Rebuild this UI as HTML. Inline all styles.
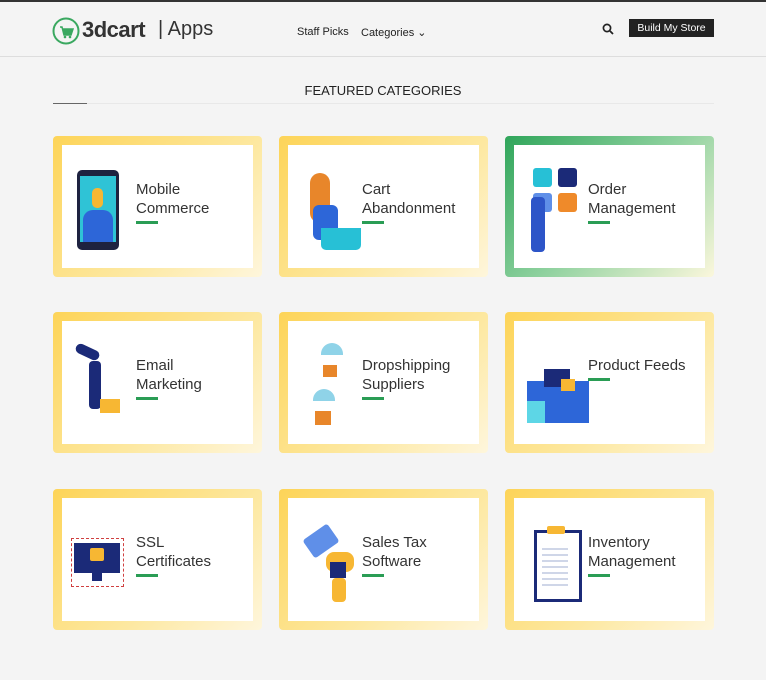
<!DOCTYPE html>
<html><head><style>
body{margin:0;width:766px;height:680px;background:#f4f4f4;font-family:"Liberation Sans",sans-serif;position:relative;overflow:hidden}
.hdr{position:absolute;left:0;top:0;width:766px;height:57px;border-bottom:1px solid #ddd;border-top:2px solid #333;box-sizing:border-box}
.abs{position:absolute}
.card{position:absolute;width:209px;height:141px;border-radius:4px;background:linear-gradient(135deg,#fdd458 0%,#fde8a0 60%,#fef6dc 100%)}
.card.g{background:linear-gradient(135deg,#2fa55a 0%,#8ed19e 50%,#fbf7dc 100%)}
.in{position:absolute;left:9px;top:9px;width:191px;height:123px;background:#fff}
.t{position:absolute;left:74px;top:35px;font-size:15px;line-height:19px;color:#333}
.bar{position:absolute;left:74px;top:76px;width:22px;height:3px;background:#2a9d55}
</style></head><body>
<div class="hdr">
 <svg class="abs" style="left:52px;top:15px" width="28" height="28"><circle cx="14" cy="14" r="12.5" fill="none" stroke="#3aa860" stroke-width="2"/><path d="M8 10h2l2 8h7l2-6H11" fill="#3aa860" stroke="#3aa860" stroke-width="1.5"/><circle cx="13" cy="20" r="1.3" fill="#3aa860"/><circle cx="18" cy="20" r="1.3" fill="#3aa860"/></svg>
 <div class="abs" style="left:82px;top:15px;font-size:22px;font-weight:bold;color:#333;letter-spacing:-0.5px">3dcart</div>
 <div class="abs" style="left:158px;top:16px;font-size:20px;color:#333">| Apps</div>
 <div class="abs" style="left:297px;top:24px;font-size:11px;color:#222">Staff Picks</div>
 <div class="abs" style="left:361px;top:24px;font-size:11px;color:#222">Categories ⌄</div>
 <svg class="abs" style="left:602px;top:21px" width="12" height="12"><circle cx="5" cy="5" r="3.6" fill="none" stroke="#222" stroke-width="1.7"/><path d="M8 8l3 3" stroke="#222" stroke-width="1.8"/></svg>
 <div class="abs" style="left:629px;top:17px;width:85px;height:18px;background:#222;color:#fff;font-size:10.5px;line-height:18px;text-align:center">Build My Store</div>
</div>
<div class="abs" style="left:0;top:83px;width:766px;text-align:center;font-size:13px;color:#222">FEATURED CATEGORIES</div>
<div class="abs" style="left:53px;top:103px;width:661px;height:1px;background:#e8e8e8"></div>
<div class="abs" style="left:53px;top:103px;width:34px;height:1px;background:#666"></div>

<div class="card" style="left:53px;top:136px"><div class="in">
 <div class="abs" style="left:15px;top:25px;width:42px;height:80px;background:#1e2240;border-radius:5px"><div class="abs" style="left:3px;top:6px;width:36px;height:66px;background:#2fc3d6"></div><div class="abs" style="left:6px;top:40px;width:30px;height:32px;background:#2d66d8;border-radius:10px 10px 0 0"></div><div class="abs" style="left:15px;top:18px;width:11px;height:20px;background:#f7b733;border-radius:5px"></div></div>
 <div class="t">Mobile<br>Commerce</div><div class="bar"></div></div></div>
<div class="card" style="left:279px;top:136px"><div class="in">
 <div class="abs" style="left:22px;top:28px;width:20px;height:50px;background:#e8862a;border-radius:10px"></div>
 <div class="abs" style="left:25px;top:60px;width:25px;height:35px;background:#2d66d8;border-radius:6px"></div>
 <div class="abs" style="left:33px;top:83px;width:40px;height:22px;background:#27c0d6;border-radius:0 0 5px 5px"></div>
 <div class="t">Cart<br>Abandonment</div><div class="bar"></div></div></div>
<div class="card g" style="left:505px;top:136px"><div class="in">
 <div class="abs" style="left:19px;top:23px;width:19px;height:19px;background:#27c0d6;border-radius:3px"></div>
 <div class="abs" style="left:44px;top:23px;width:19px;height:19px;background:#1b2a78;border-radius:3px"></div>
 <div class="abs" style="left:19px;top:48px;width:19px;height:19px;background:#5f8fe8;border-radius:3px"></div>
 <div class="abs" style="left:44px;top:48px;width:19px;height:19px;background:#ef8a2a;border-radius:3px"></div>
 <div class="abs" style="left:17px;top:52px;width:14px;height:55px;background:#2d55c8;border-radius:4px"></div>
 <div class="t">Order<br>Management</div><div class="bar"></div></div></div>

<div class="card" style="left:53px;top:312px"><div class="in">
 <div class="abs" style="left:13px;top:26px;width:25px;height:10px;background:#1b2a78;border-radius:5px;transform:rotate(25deg)"></div>
 <div class="abs" style="left:27px;top:40px;width:12px;height:48px;background:#1b2a78;border-radius:4px"></div>
 <div class="abs" style="left:38px;top:78px;width:20px;height:14px;background:#f7b733"></div>
 <div class="t">Email<br>Marketing</div><div class="bar"></div></div></div>
<div class="card" style="left:279px;top:312px"><div class="in">
 <div class="abs" style="left:33px;top:22px;width:22px;height:12px;background:#8fd3e8;border-radius:11px 11px 0 0"></div>
 <div class="abs" style="left:35px;top:44px;width:14px;height:12px;background:#e8862a"></div>
 <div class="abs" style="left:25px;top:68px;width:22px;height:12px;background:#8fd3e8;border-radius:11px 11px 0 0"></div>
 <div class="abs" style="left:27px;top:90px;width:16px;height:14px;background:#e8862a"></div>
 <div class="t">Dropshipping<br>Suppliers</div><div class="bar"></div></div></div>
<div class="card" style="left:505px;top:312px"><div class="in">
 <div class="abs" style="left:13px;top:60px;width:62px;height:42px;background:#2d66d8"></div>
 <div class="abs" style="left:13px;top:80px;width:18px;height:22px;background:#5dd6e6"></div>
 <div class="abs" style="left:30px;top:48px;width:26px;height:18px;background:#1b2a78"></div>
 <div class="abs" style="left:47px;top:58px;width:14px;height:12px;background:#f7b733"></div>
 <div class="t">Product Feeds</div><div class="bar" style="top:57px"></div></div></div>

<div class="card" style="left:53px;top:489px"><div class="in">
 <div class="abs" style="left:9px;top:40px;width:51px;height:47px;border:1px dashed #d04040"></div>
 <div class="abs" style="left:12px;top:45px;width:46px;height:30px;background:#1b2a78"></div>
 <div class="abs" style="left:28px;top:50px;width:14px;height:13px;background:#f7b733;border-radius:2px"></div>
 <div class="abs" style="left:30px;top:75px;width:10px;height:8px;background:#1b2a78"></div>
 <div class="t">SSL<br>Certificates</div><div class="bar"></div></div></div>
<div class="card" style="left:279px;top:489px"><div class="in">
 <div class="abs" style="left:18px;top:32px;width:30px;height:22px;background:#5f8fe8;transform:rotate(-35deg);border-radius:3px"></div>
 <div class="abs" style="left:38px;top:54px;width:28px;height:20px;background:#f7b733;border-radius:8px"></div>
 <div class="abs" style="left:42px;top:64px;width:16px;height:16px;background:#1b2a78"></div>
 <div class="abs" style="left:44px;top:80px;width:14px;height:24px;background:#f7b733;border-radius:4px"></div>
 <div class="t">Sales Tax<br>Software</div><div class="bar"></div></div></div>
<div class="card" style="left:505px;top:489px"><div class="in">
 <div class="abs" style="left:20px;top:32px;width:42px;height:66px;border:3px solid #1b2a78;background:#fff"></div>
 <div class="abs" style="left:33px;top:28px;width:18px;height:8px;background:#f7b733;border-radius:2px"></div>
 <div class="abs" style="left:28px;top:46px;width:26px;height:44px;background:repeating-linear-gradient(#fff 0 4px,#cfd6e8 4px 6px)"></div>
 <div class="t">Inventory<br>Management</div><div class="bar"></div></div></div>
</body></html>
